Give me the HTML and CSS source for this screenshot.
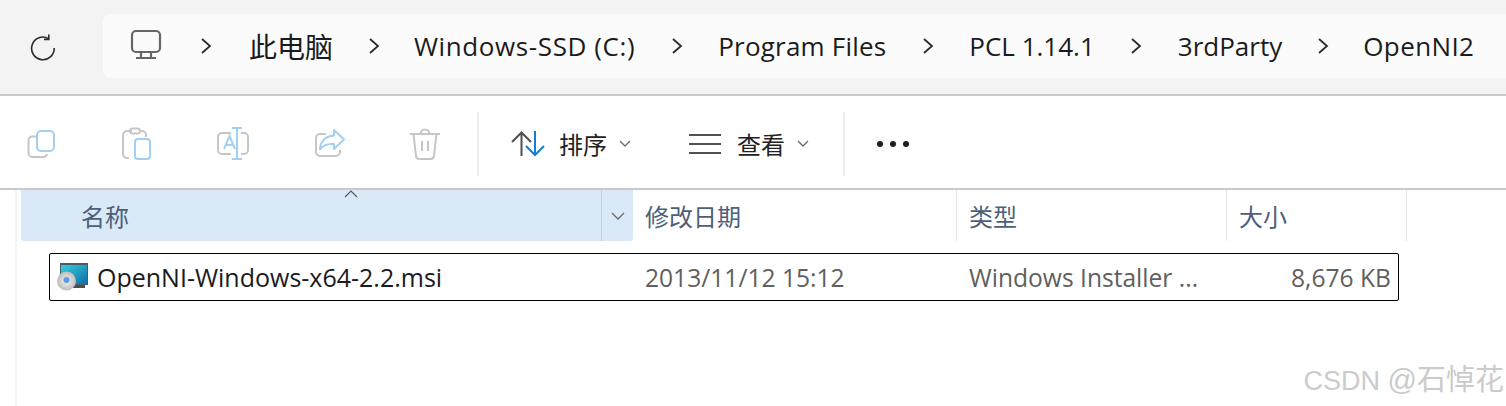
FILE: index.html
```html
<!DOCTYPE html>
<html>
  <head>
    <meta charset="UTF-8"/>
    <title>OpenNI2</title>
    <link rel="stylesheet" href="styles.css">
  </head>
  <body>
    <div class="topbar">
      <div class="refresh">
        <svg width="28" height="28" viewBox="0 0 28 28" fill="none" stroke="#2b2b2b" stroke-width="1.6">
          <path d="M19.5 5.6A11.3 11.3 0 1 0 25.2 15"/>
          <path d="M19.8 1.6V6.4H15"/>
        </svg>
      </div>
      <div class="address">
        <svg class="pc" width="32" height="32" viewBox="0 0 32 32" fill="none" stroke="#666" stroke-width="2.2">
          <rect x="2" y="2" width="28" height="21" rx="4"/>
          <path d="M11 23V28M21 23V28M6 29H26"/>
        </svg>
        <span class="sep"><svg width="12" height="18" viewBox="0 0 12 18" class="chev"><path d="M2 2L10 9L2 16"/></svg></span>
        <span class="crumb cjk">此电脑</span>
        <span class="sep sep-tight"><svg width="12" height="18" viewBox="0 0 12 18" class="chev"><path d="M2 2L10 9L2 16"/></svg></span>
        <span class="crumb drive">Windows-SSD (C:)</span>
        <span class="sep"><svg width="12" height="18" viewBox="0 0 12 18" class="chev"><path d="M2 2L10 9L2 16"/></svg></span>
        <span class="crumb program">Program Files</span>
        <span class="sep"><svg width="12" height="18" viewBox="0 0 12 18" class="chev"><path d="M2 2L10 9L2 16"/></svg></span>
        <span class="crumb">PCL 1.14.1</span>
        <span class="sep"><svg width="12" height="18" viewBox="0 0 12 18" class="chev"><path d="M2 2L10 9L2 16"/></svg></span>
        <span class="crumb">3rdParty</span>
        <span class="sep sep-tight"><svg width="12" height="18" viewBox="0 0 12 18" class="chev"><path d="M2 2L10 9L2 16"/></svg></span>
        <span class="crumb current">OpenNI2</span>
      </div>
    </div>

    <div class="toolbar">
      <div class="tool-icons">
        <!-- copy -->
        <svg width="32" height="30" viewBox="0 0 32 30" fill="none" stroke-width="2">
          <path d="M11 7.5H6.5A4 4 0 0 0 2.5 11.5V24A4 4 0 0 0 6.500 28H17A4 4 0 0 0 21 25" stroke="#c6c6c6"/>
          <rect x="11" y="2" width="17" height="20" rx="4" stroke="#a3d0f2"/>
        </svg>
        <!-- paste -->
        <svg width="30" height="34" viewBox="0 0 30 34" fill="none" stroke-width="2">
          <path d="M7 31H5A4 4 0 0 1 1 27V8A4 4 0 0 1 5 4H10M18 4H20A4 4 0 0 1 24 8V10" stroke="#c6c6c6"/>
          <rect x="8" y="1.500" width="10" height="5" rx="2.500" stroke="#c6c6c6"/>
          <rect x="13" y="12" width="15" height="20" rx="3" stroke="#a3d0f2"/>
        </svg>
        <!-- rename -->
        <svg width="34" height="34" viewBox="0 0 34 34" fill="none" stroke-width="2">
          <path d="M15 6H6A4 4 0 0 0 2 10V23A4 4 0 0 0 6 27H15M25 6H28A4 4 0 0 1 32 10V23A4 4 0 0 1 28 27H25" stroke="#c6c6c6"/>
          <path d="M16 1H26M21 1V32M16 32H26M8 22L13.500 9L19 22M10 18H17" stroke="#a3d0f2"/>
        </svg>
        <!-- share -->
        <svg width="32" height="32" viewBox="0 0 32 32" fill="none" stroke-width="2">
          <path d="M12 6H6A4 4 0 0 0 2 10V24A4 4 0 0 0 6 28H22A4 4 0 0 0 26 24V22" stroke="#c6c6c6"/>
          <path d="M20 2L30 11.500L20 21V16C14 15.500 9 17 6 21.500C6 14 11 8 20 7.500Z" stroke="#a3d0f2" stroke-linejoin="round"/>
        </svg>
        <!-- delete -->
        <svg width="30" height="32" viewBox="0 0 30 32" fill="none" stroke="#c6c6c6" stroke-width="2">
          <path d="M0 6H30M3.500 6L6 28A3.500 3.500 0 0 0 9.500 31H20.500A3.500 3.500 0 0 0 24 28L26.500 6"/>
          <path d="M10.500 6A4.500 4.500 0 0 1 19.500 6M12 13V23M18 13V23"/>
        </svg>
      </div>
      <div class="tool-divider"></div>
      <div class="tool-btn sort">
        <svg width="34" height="26" viewBox="0 0 34 26" fill="none" stroke-width="2">
          <path d="M1 11L10.500 1.500L20 11M10.500 2V25" stroke="#505050"/>
          <path d="M24 0V24M15 15L24 24L33 15" stroke="#0f7fd8"/>
        </svg>
        <span class="tool-label">排序</span>
        <svg class="small-chev" width="12" height="8" viewBox="0 0 12 8"><path d="M1 1L6 6L11 1"/></svg>
      </div>
      <div class="tool-btn view">
        <svg width="32" height="20" viewBox="0 0 32 20" fill="none" stroke="#505050" stroke-width="2">
          <path d="M0 1H32M0 10H32M0 19H32"/>
        </svg>
        <span class="tool-label">查看</span>
        <svg class="small-chev" width="12" height="8" viewBox="0 0 12 8"><path d="M1 1L6 6L11 1"/></svg>
      </div>
      <div class="tool-divider"></div>
      <div class="more"><span></span><span></span><span></span></div>
    </div>

    <div class="content">
      <div class="files">
        <div class="head">
          <div class="col-name">
            <span>名称</span>
            <svg class="sort-arrow" width="14" height="8" viewBox="0 0 14 8"><path d="M1 7L7 1L13 7"/></svg>
            <div class="drop"><svg class="small-chev" width="14" height="8" viewBox="0 0 14 8"><path d="M1 1L7 7L13 1"/></svg></div>
          </div>
          <div class="col col-date">修改日期</div>
          <div class="col col-type">类型</div>
          <div class="col col-size">大小</div>
        </div>
        <div class="row">
          <div class="file-name">
            <svg width="31" height="28" viewBox="0 0 31 28">
              <defs>
                <linearGradient id="screen" x1="0" y1="0" x2="1" y2="1">
                  <stop offset="0" stop-color="#35cfdc"/>
                  <stop offset="1" stop-color="#0f6fa8"/>
                </linearGradient>
                <radialGradient id="disc">
                  <stop offset="0" stop-color="#f4f4f4"/>
                  <stop offset="1" stop-color="#bcbcbc"/>
                </radialGradient>
              </defs>
              <rect x="3" y="0" width="28" height="22" fill="#4a5a66"/>
              <rect x="4" y="2" width="26" height="19" fill="url(#screen)"/>
              <rect x="15" y="22" width="13" height="3" fill="#4a4f55"/>
              <circle cx="9.500" cy="18" r="9.500" fill="url(#disc)"/>
              <circle cx="9.500" cy="17" r="3" fill="#5a9fdc"/>
            </svg>
            <span>OpenNI-Windows-x64-2.2.msi</span>
          </div>
          <div class="col-date cell">2013/11/12 15:12</div>
          <div class="col-type cell">Windows Installer ...</div>
          <div class="col-size cell">8,676 KB</div>
        </div>
      </div>
    </div>

    <div class="watermark">CSDN <span class="wm-cjk">@石悼花</span></div>
  </body>
</html>
```

FILE: styles.css
```css
*{
  margin: 0px;
  box-sizing: border-box;
}

html, body{
  height: 100%;
  overflow: hidden;
}

body{
  position: relative;
  display: flex;
  flex-direction: column;
  background-color: #fff;
  font-family: "Open Sans", "Noto Sans CJK SC", sans-serif;
  color: #1b1b1b;
}

.topbar{
  height: 96px;
  display: flex;
  align-items: flex-start;
  padding-top: 14px;
  background-color: #f3f3f3;
  border-bottom: 2px solid #c9c9c9;
}

.refresh{
  width: 103px;
  height: 64px;
  padding: 19px 0px 0px 29px;
}

.address{
  flex: 1;
  height: 64px;
  display: flex;
  align-items: center;
  padding-left: 27px;
  background-color: #fbfbfb;
  border-radius: 8px 0px 0px 8px;
  font-size: 26px;
  white-space: nowrap;
  overflow: hidden;
}

.pc{
  margin-top: -2px;
}

.sep{
  width: 83px;
  display: flex;
  justify-content: center;
}

.address .sep:first-of-type{
  width: 87px;
}

.address .sep-tight{
  width: 81px;
}

.chev{
  fill: none;
  stroke: #2b2b2b;
  stroke-width: 1.8;
}

.drive{
  letter-spacing: 0.6px;
}

.program{
  letter-spacing: 0.2px;
}

.current{
  letter-spacing: 0.4px;
}

.cjk{
  font-size: 28px;
}

.toolbar{
  height: 94px;
  display: flex;
  align-items: center;
  padding-top: 3px;
  border-bottom: 2px solid #c9c9c9;
}

.tool-icons{
  width: 477px;
  display: flex;
  align-items: center;
  gap: 64px;
  padding-left: 26px;
}

.tool-divider{
  width: 2px;
  height: 64px;
  background-color: #eeeeee;
}

.tool-btn{
  display: flex;
  align-items: center;
}

.sort{
  width: 178px;
  padding-left: 32px;
}

.view{
  width: 186px;
  padding-left: 32px;
}

.tool-label{
  font-size: 24px;
  margin-left: 14px;
  color: #222;
}

.view .tool-label{
  margin-left: 16px;
}

.small-chev{
  fill: none;
  stroke: #6a6a6a;
  stroke-width: 1.3;
}

.tool-btn .small-chev{
  margin-left: 12px;
}

.more{
  display: flex;
  gap: 7px;
  padding-left: 32px;
}

.more span{
  width: 6px;
  height: 6px;
  border-radius: 3px;
  background-color: #1f1f1f;
}

.content{
  flex: 1;
  padding-left: 17px;
}

.files{
  height: 100%;
  padding-left: 4px;
  border-left: 2px solid #f3f3f3;
  margin-left: -2px;
}

.head{
  height: 51px;
  display: flex;
  font-size: 24px;
  color: #4c607a;
}

.col-name{
  position: relative;
  width: 612px;
  flex-shrink: 0;
  display: flex;
  align-items: center;
  padding-left: 60px;
  background-color: #d9e9f7;
  border-radius: 0px 0px 3px 3px;
}

.sort-arrow{
  position: absolute;
  left: 323px;
  top: 0px;
  fill: none;
  stroke: #5a5a5a;
  stroke-width: 1.2;
}

.drop{
  position: absolute;
  right: 0px;
  top: 0px;
  bottom: 0px;
  width: 32px;
  display: flex;
  align-items: center;
  justify-content: center;
  border-left: 1px solid #bccfdf;
}

.col{
  display: flex;
  align-items: center;
  padding-left: 12px;
  border-right: 1px solid #e5e5e5;
}

.col-date{
  width: 324px;
}

.col-type{
  width: 270px;
}

.col-size{
  width: 180px;
}

.row{
  height: 48px;
  width: 1350px;
  margin-top: 12px;
  margin-left: 28px;
  display: flex;
  align-items: center;
  border: 1.5px solid #000;
  border-radius: 2px;
  font-size: 25px;
}

.file-name{
  width: 583px;
  display: flex;
  align-items: center;
  gap: 9px;
  padding-left: 7px;
}

.cell{
  padding-left: 12px;
  color: #5f5f5f;
  font-size: 24.6px;
  white-space: nowrap;
}

.row .col-date{
  width: 324px;
}

.row .col-type{
  width: 270px;
}

.row .col-size{
  width: 171px;
  padding-right: 7px;
  text-align: right;
}

.watermark{
  position: absolute;
  right: 2px;
  bottom: 8px;
  font-family: "Liberation Sans", "Noto Sans CJK SC", sans-serif;
  font-size: 27px;
  color: #cbcbcb;
}

.wm-cjk{
  font-size: 29px;
}
```
